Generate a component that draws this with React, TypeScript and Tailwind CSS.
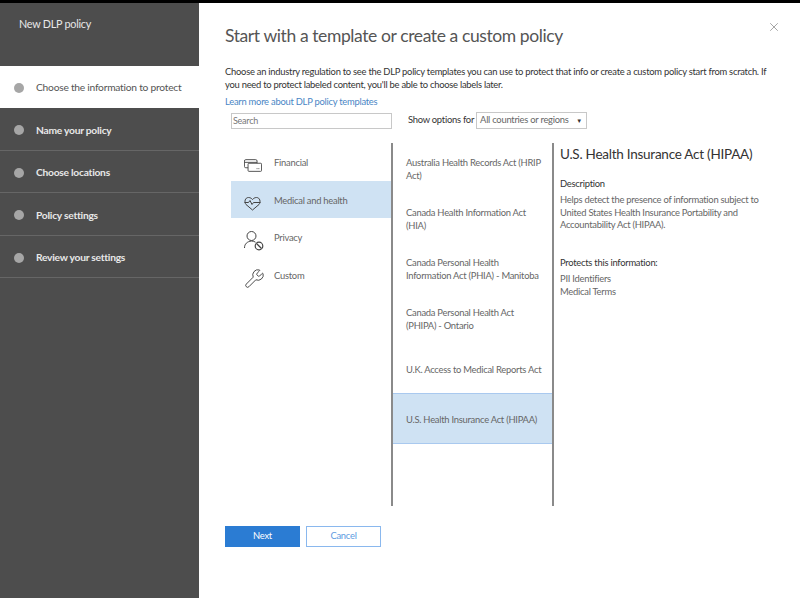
import React from 'react';
import { X, Wrench } from 'lucide-react';

const steps = ['Name your policy', 'Choose locations', 'Policy settings', 'Review your settings'];

const acts = [
  { name: 'Australia Health Records Act (HRIP Act)' },
  { name: 'Canada Health Information Act (HIA)' },
  { name: 'Canada Personal Health Information Act (PHIA) - Manitoba' },
  { name: 'Canada Personal Health Act (PHIPA) - Ontario' },
  { name: 'U.K. Access to Medical Reports Act' },
];

function FinancialIcon() {
  return (
    <svg width="18" height="13" viewBox="0 0 20 14" fill="none" stroke="#444" strokeWidth="1">
      <rect x="0.5" y="0.5" width="14" height="9" rx="1.5" />
      <path d="M0.5 3.5h14" />
      <rect x="4.5" y="4.5" width="15" height="9" rx="1" fill="#fff" />
      <path d="M14 10.5h1M16 10.5h1" />
    </svg>
  );
}

function HeartIcon() {
  return (
    <svg width="17" height="15" viewBox="0 0 17 15" fill="none" stroke="#444" strokeWidth="1">
      <path d="M2 8.5C0 6 1 1.5 4.5 1.5c2 0 3 1 4 2 1-1 2-2 4-2 3.5 0 4.500 4.500 2.500 7l-6.500 5.500z" />
      <path d="M0.5 6.500h4l1.500-2 2 4 1.500-2h7" />
    </svg>
  );
}

function PrivacyIcon() {
  return (
    <svg width="20" height="20" viewBox="0 0 20 20" fill="none" stroke="#444" strokeWidth="1">
      <circle cx="7.5" cy="5" r="4.5" />
      <path d="M0.5 17c0-4 2.500-6.500 7-7 1.500 0 3 .5 4 1.200" />
      <circle cx="15" cy="15" r="3.800" strokeWidth="1.200" />
      <path d="M12.500 12.500l5 5" strokeWidth="1.200" />
    </svg>
  );
}

const categories = [
  { name: 'Financial', icon: <FinancialIcon />, active: false },
  { name: 'Medical and health', icon: <HeartIcon />, active: true },
  { name: 'Privacy', icon: <PrivacyIcon />, active: false },
  { name: 'Custom', icon: <Wrench size={21} strokeWidth={1.1} color="#444" />, active: false },
];

export default function App() {
  return (
    <div className="flex h-[598px] w-[800px] flex-col overflow-hidden bg-white font-['Lato',sans-serif] text-[9.4px] tracking-[-0.25px] text-[#5a5a5a]">
      <div className="h-[3px] bg-black" />
      <div className="flex min-h-0 flex-1">
        {/* Step sidebar */}
        <aside className="w-[199px] shrink-0 bg-[#4d4d4d]">
          <div className="h-[63px] pl-[19px] pt-[13px] text-[10.8px] text-[#e8e8e8]">New DLP policy</div>
          <div className="flex h-[42px] items-center gap-[12px] bg-white pl-[14px] pt-[1px] text-[#555]">
            <span className="size-[10px] rounded-full bg-[#a6a6a6]" />
            <span className="text-[10.25px]">Choose the information to protect</span>
          </div>
          {steps.map((step) => (
            <div key={step} className="flex h-[42.6px] items-center gap-[12px] border-b border-[#666] pl-[14px] pt-[3px]">
              <span className="size-[10px] rounded-full bg-[#a6a6a6]" />
              <span className="text-[10.25px] font-bold text-[#e8e8e8]">{step}</span>
            </div>
          ))}
        </aside>

        {/* Main panel */}
        <main className="relative min-w-0 flex-1 pl-[26px] pt-[21px]">
          <button className="absolute right-[19px] top-[17px] text-[#666]">
            <X size={14} strokeWidth={1} />
          </button>
          <h1 className="text-[17.5px] leading-[24px] tracking-[-0.4px] text-[#555]">Start with a template or create a custom policy</h1>
          <p className="mt-[17px] w-[550px] text-[9.4px] leading-[13px] text-[#333]">
            Choose an industry regulation to see the DLP policy templates you can use to protect that info or create a custom policy start from scratch. If you need to protect labeled content, you'll be able to choose labels later.
          </p>
          <a className="mt-[4px] block text-[9.4px] leading-[13px] text-[#4a86c5]">Learn more about DLP policy templates</a>

          <div className="ml-[6px] mt-[4px] flex items-center">
            <div className="flex h-[16px] w-[161px] items-center border border-[#c8c8c8] pl-[1px] text-[9px] text-[#777]">Search</div>
            <span className="ml-[16px] text-[9.4px] text-[#333]">Show options for</span>
            <div className="ml-[2px] flex h-[17px] w-[111px] items-center justify-between whitespace-nowrap border border-[#c8c8c8] pl-[3px] pr-[4px] text-[9.4px] text-[#666]">
              <span>All countries or regions</span>
              <span className="text-[6px] text-[#333]">▼</span>
            </div>
          </div>

          <div className="ml-[6px] mt-[14px] flex h-[363px]">
            {/* Categories */}
            <div className="w-[160px] shrink-0">
              {categories.map((c) => (
                <div key={c.name} className={`flex h-[37.5px] items-center pl-[13px] ${c.active ? 'bg-[#cfe2f3]' : ''}`}>
                  <span className="flex w-[30px] items-center justify-start pt-[8px]">{c.icon}</span>
                  <span className="pt-[3px] text-[9.4px] text-[#666]">{c.name}</span>
                </div>
              ))}
            </div>

            {/* Acts */}
            <div className="w-[163px] shrink-0 border-x-2 border-[#8a8a8a]">
              <div className="flex flex-col">
                {acts.map((a) => (
                  <div key={a.name} className="flex h-[50px] items-center pl-[13px] pt-[2px] text-[9.4px] leading-[13px] text-[#666]">
                    <span className="w-[137px]">{a.name}</span>
                  </div>
                ))}
                <div className="flex h-[51px] items-center border-y border-[#a9c9ef] bg-[#cfe2f3] pl-[13px] pt-[3px] text-[9.4px] text-[#666]">
                  U.S. Health Insurance Act (HIPAA)
                </div>
              </div>
            </div>

            {/* Details */}
            <div className="min-w-0 flex-1 pl-[6px] pt-[1px]">
              <h2 className="text-[13.5px] leading-[20px] text-[#333]">U.S. Health Insurance Act (HIPAA)</h2>
              <div className="mt-[13px] text-[9.4px] leading-[14px] text-[#333]">Description</div>
              <p className="mt-[3px] w-[205px] text-[9.4px] leading-[12.5px] text-[#666]">
                Helps detect the presence of information subject to United States Health Insurance Portability and Accountability Act (HIPAA).
              </p>
              <div className="mt-[24px] text-[9.4px] leading-[14px] text-[#333]">Protects this information:</div>
              <div className="mt-[2px] text-[9.4px] leading-[13px] text-[#666]">PII Identifiers</div>
              <div className="text-[9.4px] leading-[13px] text-[#666]">Medical Terms</div>
            </div>
          </div>

          <div className="mt-[20px] flex gap-[6px]">
            <button className="h-[21px] w-[75px] bg-[#2b7cd3] text-[9.4px] text-white">Next</button>
            <button className="h-[21px] w-[75px] border border-[#8ab8ee] text-[9.4px] text-[#5d9bdf]">Cancel</button>
          </div>
        </main>
      </div>
    </div>
  );
}
